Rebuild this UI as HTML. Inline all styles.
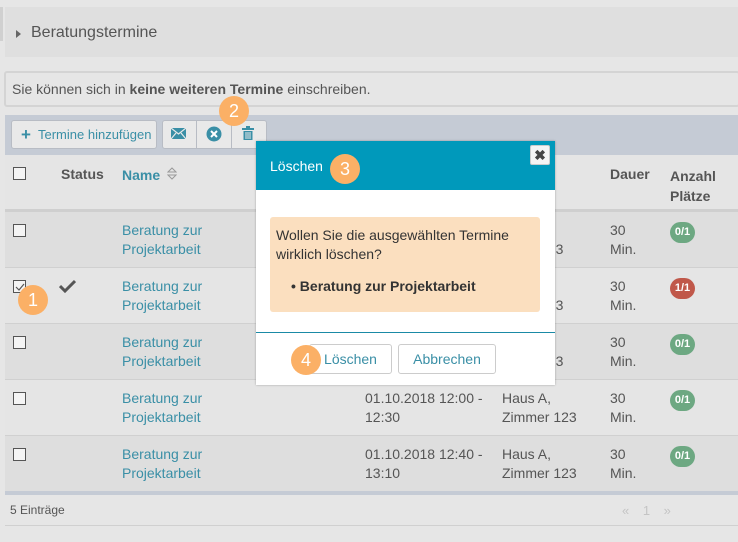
<!DOCTYPE html>
<html><head><meta charset="utf-8"><style>
*{margin:0;padding:0;box-sizing:border-box}
body{width:738px;height:542px;background:#e6e6e6;font-family:"Liberation Sans",sans-serif;font-size:14px;color:#555;position:relative;overflow:hidden}
.a{position:absolute}
.cb{position:absolute;width:13px;height:13px;border:1px solid #555;background:#f4f4f4}
.lnk{color:#3a8fa6;line-height:19px}
.t{line-height:19px;color:#555}
.badge{position:absolute;width:25px;height:21px;border-radius:11px;background:#6da882;color:#fff;font-size:11px;font-weight:bold;text-align:center;line-height:21px}
.circ{position:absolute;width:30px;height:30px;border-radius:15px;background:#fbb066;color:#fff;font-size:18px;text-align:center;line-height:30px}
.btn{position:absolute;background:#e9e9e9;border:1px solid #b8bcc4;border-radius:3px}
</style></head><body>
<div class="a" style="left:0;top:7px;width:3px;height:34px;background:#d0d0d0"></div>
<div class="a" style="left:5px;top:7px;width:733px;height:50px;background:#dfdfdf"></div>
<div class="a" style="left:16px;top:30px;width:0;height:0;border-left:5px solid #666;border-top:4px solid transparent;border-bottom:4px solid transparent"></div>
<div class="a" style="left:31px;top:24px;font-size:16px;color:#555">Beratungstermine</div>
<div class="a" style="left:4px;top:71px;width:736px;height:36px;border:2px solid #d4d4d4;border-radius:3px;background:#e6e6e6"></div>
<div class="a" style="left:12px;top:81px;font-size:14px;color:#555">Sie können sich in <b>keine weiteren Termine</b> einschreiben.</div>
<div class="a" style="left:5px;top:115px;width:733px;height:40px;background:#c5cbd5"></div>
<div class="btn" style="left:11px;top:120px;width:146px;height:29px"></div>
<div class="a" style="left:21px;top:125px;font-size:17px;font-weight:bold;color:#3a8fa6">+</div>
<div class="a" style="left:38px;top:127px;font-size:13px;color:#3a8fa6">Termine hinzufügen</div>
<div class="btn" style="left:162px;top:120px;width:105px;height:29px"></div>
<div class="a" style="left:196px;top:121px;width:1px;height:27px;background:#b8bcc4"></div>
<div class="a" style="left:231px;top:121px;width:1px;height:27px;background:#b8bcc4"></div>
<svg class="a" style="left:171px;top:128px" width="15" height="11"><rect x="0" y="0" width="15" height="11" fill="#3a8fa6"/><path d="M0 0L7.5 6L15 0M0 11L5 5M15 11L10 5" stroke="#e9e9e9" stroke-width="1.2" fill="none"/></svg>
<svg class="a" style="left:206px;top:126px" width="16" height="16"><circle cx="8" cy="8" r="7.5" fill="#3a8fa6"/><path d="M5 5L11 11M11 5L5 11" stroke="#fff" stroke-width="2"/></svg>
<svg class="a" style="left:242px;top:126px" width="12" height="15"><rect x="0" y="2" width="12" height="2" fill="#3a8fa6"/><rect x="4" y="0" width="4" height="2" fill="#3a8fa6"/><path d="M1.5 5H10.5V14H1.5Z" fill="#3a8fa6"/><path d="M4 6V13M6 6V13M8 6V13" stroke="#e9e9e9" stroke-width="1"/></svg>

<div class="a" style="left:5px;top:155px;width:733px;height:55px;background:#e5e5e5"></div>
<div class="cb" style="left:13px;top:167px"></div>
<div class="a" style="left:61px;top:166px;font-weight:bold;color:#555">Status</div>
<div class="a" style="left:122px;top:167px;font-weight:bold;color:#3a8fa6">Name</div>
<svg class="a" style="left:167px;top:167px" width="10" height="13"><path d="M1 5L5 1L9 5ZM1 8L5 12L9 8Z" fill="none" stroke="#999" stroke-width="1"/></svg>
<div class="a" style="left:610px;top:166px;font-weight:bold;color:#555">Dauer</div>
<div class="a" style="left:670px;top:166px;font-weight:bold;color:#555;line-height:20px">Anzahl<br>Plätze</div>
<div class="a" style="left:5px;top:209px;width:733px;height:3px;background:#cfcfcf"></div>

<div class="a" style="left:5px;top:212px;width:733px;height:56px;background:#dedede;border-bottom:1px solid #d0d0d0"></div>
<div class="a" style="left:5px;top:268px;width:733px;height:56px;background:#e5e5e5;border-bottom:1px solid #d0d0d0"></div>
<div class="a" style="left:5px;top:324px;width:733px;height:56px;background:#dedede;border-bottom:1px solid #d0d0d0"></div>
<div class="a" style="left:5px;top:380px;width:733px;height:56px;background:#e5e5e5;border-bottom:1px solid #d0d0d0"></div>
<div class="a" style="left:5px;top:436px;width:733px;height:55px;background:#dedede"></div>
<div class="a" style="left:5px;top:491px;width:733px;height:4px;background:#c5cbd5"></div>

<div class="cb" style="left:13px;top:224px"></div>
<div class="cb" style="left:13px;top:280px"></div>
<svg class="a" style="left:14px;top:281px" width="12" height="12"><path d="M2 6L5 9L10 3" stroke="#555" stroke-width="1.2" fill="none"/></svg>
<div class="cb" style="left:13px;top:336px"></div>
<div class="cb" style="left:13px;top:392px"></div>
<div class="cb" style="left:13px;top:448px"></div>
<svg class="a" style="left:59px;top:279px" width="17" height="14"><path d="M1 7L6 12L16 2" stroke="#555" stroke-width="3" fill="none"/></svg>

<div class="a lnk" style="left:122px;top:221px">Beratung zur<br>Projektarbeit</div>
<div class="a lnk" style="left:122px;top:277px">Beratung zur<br>Projektarbeit</div>
<div class="a lnk" style="left:122px;top:333px">Beratung zur<br>Projektarbeit</div>
<div class="a lnk" style="left:122px;top:389px">Beratung zur<br>Projektarbeit</div>
<div class="a lnk" style="left:122px;top:445px">Beratung zur<br>Projektarbeit</div>

<div class="a t" style="left:540px;top:240px">123</div>
<div class="a t" style="left:540px;top:296px">123</div>
<div class="a t" style="left:540px;top:352px">123</div>
<div class="a t" style="left:365px;top:389px">01.10.2018 12:00 -<br>12:30</div>
<div class="a t" style="left:502px;top:389px">Haus A,<br>Zimmer 123</div>
<div class="a t" style="left:365px;top:445px">01.10.2018 12:40 -<br>13:10</div>
<div class="a t" style="left:502px;top:445px">Haus A,<br>Zimmer 123</div>

<div class="a t" style="left:610px;top:221px">30<br>Min.</div>
<div class="a t" style="left:610px;top:277px">30<br>Min.</div>
<div class="a t" style="left:610px;top:333px">30<br>Min.</div>
<div class="a t" style="left:610px;top:389px">30<br>Min.</div>
<div class="a t" style="left:610px;top:445px">30<br>Min.</div>
<div class="badge" style="left:670px;top:222px">0/1</div>
<div class="badge" style="left:670px;top:278px;background:#c0584a">1/1</div>
<div class="badge" style="left:670px;top:334px">0/1</div>
<div class="badge" style="left:670px;top:390px">0/1</div>
<div class="badge" style="left:670px;top:446px">0/1</div>

<div class="a" style="left:10px;top:503px;font-size:12px;color:#555">5 Einträge</div>
<div class="a" style="left:622px;top:503px;font-size:13px;color:#c4c4c4;word-spacing:10px">« 1 »</div>
<div class="a" style="left:5px;top:525px;width:733px;height:1px;background:#d0d0d0"></div>

<div class="a" style="left:256px;top:141px;width:299px;height:244px;background:#fff;box-shadow:0 0 2px rgba(0,0,0,.3)"></div>
<div class="a" style="left:256px;top:141px;width:299px;height:49px;background:#0099bb"></div>
<div class="a" style="left:270px;top:158px;color:#fff;font-size:14px">Löschen</div>
<div class="a" style="left:530px;top:145px;width:20px;height:20px;background:#f4f4f4;border:1px solid #ccc;border-radius:2px;text-align:center;line-height:18px;font-weight:bold;font-size:14px;color:#444">✖</div>
<div class="a" style="left:270px;top:217px;width:270px;height:95px;background:#fbdfbf;border-radius:3px"></div>
<div class="a" style="left:276px;top:226px;color:#333;line-height:19px">Wollen Sie die ausgewählten Termine<br>wirklich löschen?</div>
<div class="a" style="left:291px;top:278px;color:#333;font-weight:bold">• Beratung zur Projektarbeit</div>
<div class="a" style="left:256px;top:332px;width:299px;height:1px;background:#1a8aa6"></div>
<div class="a" style="left:309px;top:344px;width:83px;height:30px;border:1px solid #ccc;border-radius:3px;background:#fff;color:#3a8fa6;text-align:center;line-height:28px">Löschen</div>
<div class="a" style="left:398px;top:344px;width:98px;height:30px;border:1px solid #ccc;border-radius:3px;background:#fff;color:#3a8fa6;text-align:center;line-height:28px">Abbrechen</div>

<div class="circ" style="left:18px;top:285px">1</div>
<div class="circ" style="left:219px;top:96px">2</div>
<div class="circ" style="left:330px;top:154px">3</div>
<div class="circ" style="left:291px;top:345px">4</div>
</body></html>
